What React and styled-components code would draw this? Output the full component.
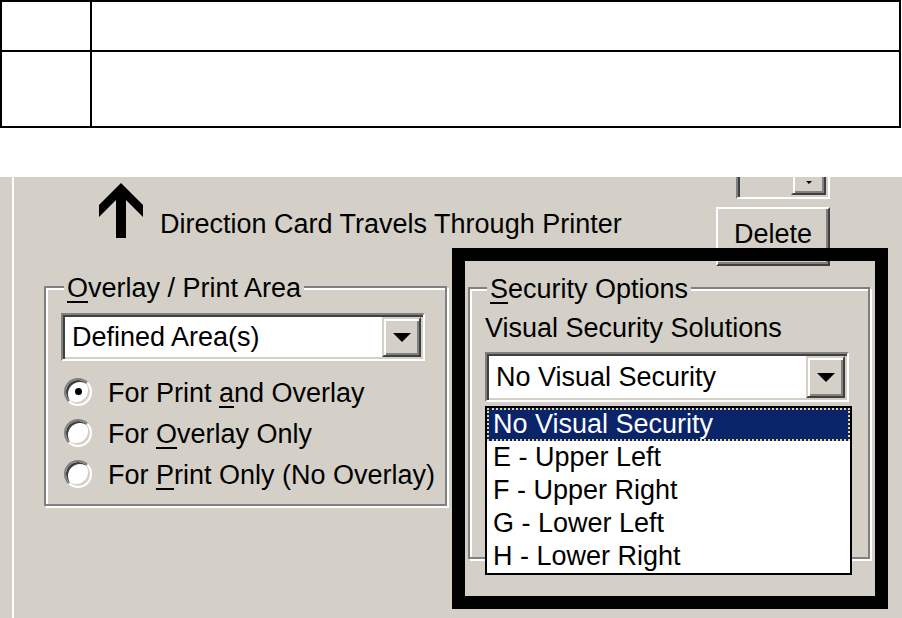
import React from 'react';
import styled, { createGlobalStyle, css } from 'styled-components';

const GlobalStyle = createGlobalStyle`
  body {
    margin: 0;
    background: #fff;
    font-family: 'Liberation Sans', Arial, sans-serif;
    color: #000;
  }
`;

const face = '#d4d0c8';

const Page = styled.div`
  width: 902px;
`;

const DocTable = styled.table`
  width: 901px;
  border-collapse: collapse;
`;

const Row = styled.tr`
  height: ${({ h }) => h}px;
`;

const Cell = styled.td`
  border: 2px solid #000;
  padding: 0;
  width: ${({ w }) => (w ? `${w}px` : 'auto')};
`;

const Panel = styled.div`
  position: relative;
  margin-top: 49px;
  height: 442px;
  box-sizing: border-box;
  padding-left: 12px;
  background: ${face};
  overflow: hidden;
  font-size: 27px;
`;

const PanelInner = styled.div`
  height: 100%;
  border-left: 2px solid #fff;
  display: flex;
  flex-direction: column;
`;

const Header = styled.div`
  display: flex;
  align-items: flex-start;
  height: 89px;
`;

const Caption = styled.div`
  display: flex;
  align-items: flex-start;
  margin: 6px 0 0 85px;
`;

const CaptionText = styled.span`
  margin: 26px 0 0 17px;
  line-height: 31px;
  white-space: nowrap;
`;

const SideColumn = styled.div`
  margin: 0 72px 0 auto;
  width: 114px;
  display: flex;
  flex-direction: column;
  align-items: flex-end;
`;

const StubCombo = styled.div`
  width: 94px;
  height: 40px;
  margin-top: -18px;
  box-sizing: border-box;
  border: 2px solid;
  border-color: #808080 #fff #fff #808080;
  box-shadow: inset 2px 2px 0 #404040;
  display: flex;
  justify-content: flex-end;
  padding: 0 2px 2px 0;
`;

const StubButton = styled.div`
  width: 35px;
  box-sizing: border-box;
  border: 2px solid;
  border-color: ${face} #404040 #404040 ${face};
  box-shadow: inset 2px 2px 0 #fff, inset -2px -2px 0 #808080;
  background: ${face};
  display: flex;
  align-items: flex-end;
  justify-content: center;
  padding-bottom: 9px;
`;

const SmallArrow = styled.div`
  width: 0;
  border-left: 3px solid transparent;
  border-right: 3px solid transparent;
  border-top: 3px solid #000;
`;

const Button = styled.div`
  margin-top: 8px;
  width: 114px;
  height: 59px;
  box-sizing: border-box;
  border: 2px solid;
  border-color: #fff #404040 #404040 #fff;
  box-shadow: inset -2px -2px 0 #808080;
  display: flex;
  align-items: center;
  justify-content: center;
  padding-bottom: 5px;
  line-height: 31px;
`;

const GroupsRow = styled.div`
  display: flex;
  align-items: flex-start;
  margin-top: 20px;
`;

const GroupBox = styled.div`
  width: ${({ w }) => w}px;
  height: ${({ h }) => h}px;
  margin: ${({ top }) => top || 0}px 0 0 ${({ left }) => left}px;
  box-sizing: border-box;
  border: 2px solid #808080;
  box-shadow: inset 2px 2px 0 #fff, 2px 2px 0 #fff;
  display: flex;
  flex-direction: column;
  align-items: flex-start;
`;

const Legend = styled.div`
  margin: -15px 0 0 ${({ left }) => left}px;
  padding: 0 3px;
  background: ${face};
  line-height: 31px;
  white-space: nowrap;
`;

const Key = styled.span`
  text-decoration: underline;
  text-decoration-thickness: 2px;
  text-underline-offset: 4px;
`;

const FieldLabel = styled.div`
  margin: 8px 0 0 15px;
  line-height: 31px;
  white-space: nowrap;
`;

const Combo = styled.div`
  margin: ${({ top }) => top}px 0 0 15px;
  width: 364px;
  height: ${({ h }) => h}px;
  box-sizing: border-box;
  border: 2px solid;
  border-color: #808080 #fff #fff #808080;
  box-shadow: inset 2px 2px 0 #404040, inset -2px -2px 0 ${face};
  background: #fff;
  display: flex;
  align-items: center;
  padding: 2px 2px 2px 9px;
`;

const ComboText = styled.span`
  white-space: nowrap;
  line-height: 31px;
`;

const DropButton = styled.div`
  margin-left: auto;
  width: 39px;
  height: 100%;
  box-sizing: border-box;
  border: 2px solid;
  border-color: ${face} #404040 #404040 ${face};
  box-shadow: inset 2px 2px 0 #fff, inset -2px -2px 0 #808080;
  background: ${face};
  display: flex;
  align-items: center;
  justify-content: center;
`;

const DropArrow = styled.div`
  width: 0;
  border-left: 9px solid transparent;
  border-right: 9px solid transparent;
  border-top: 9px solid #000;
`;

const RadioList = styled.div`
  display: flex;
  flex-direction: column;
  margin: 12px 0 0 18px;
`;

const RadioRow = styled.div`
  display: flex;
  align-items: center;
  gap: 16px;
  height: 41px;
  white-space: nowrap;
`;

const RadioCircle = styled.div`
  width: 28px;
  height: 28px;
  margin-bottom: 4px;
  box-sizing: border-box;
  border-radius: 50%;
  border: 2px solid;
  border-color: #808080 #fff #fff #808080;
  box-shadow: inset 2px 2px 0 #404040, inset -2px -2px 0 ${face};
  background: #fff;
  display: flex;
  align-items: center;
  justify-content: center;

  ${({ checked }) =>
    checked &&
    css`
      &::after {
        content: '';
        width: 7px;
        height: 7px;
        border-radius: 50%;
        background: #000;
      }
    `}
`;

const DropList = styled.div`
  position: absolute;
  left: 485px;
  top: 229px;
  width: 367px;
  box-sizing: border-box;
  border: 2px solid #000;
  background: #fff;
  z-index: 1;
`;

const DropItem = styled.div`
  line-height: 33px;
  padding-left: 6px;
  white-space: nowrap;

  ${({ selected }) =>
    selected &&
    css`
      background: #0a246a;
      color: #fff;
      outline: 2px dotted #e8d48a;
      outline-offset: -2px;
    `}
`;

const Frame = styled.div`
  position: absolute;
  left: 452px;
  top: 71px;
  width: 436px;
  height: 361px;
  box-sizing: border-box;
  border: 13px solid #000;
  z-index: 2;
  pointer-events: none;
`;

const UpArrow = () => (
  <svg width="44" height="55" viewBox="0 0 44 55">
    <polygon points="22,0 44,22 44,34 27,17 27,55 17,55 17,17 0,34 0,22" fill="#000" />
  </svg>
);

const radios = [
  { label: <>For Print <Key>a</Key>nd Overlay</>, checked: true },
  { label: <>For <Key>O</Key>verlay Only</> },
  { label: <>For <Key>P</Key>rint Only (No Overlay)</> },
];

const options = [
  'No Visual Security',
  'E - Upper Left',
  'F - Upper Right',
  'G - Lower Left',
  'H - Lower Right',
];

const App = () => (
  <Page>
    <GlobalStyle />
    <DocTable>
      <tbody>
        <Row h={50}>
          <Cell w={88} />
          <Cell />
        </Row>
        <Row h={76}>
          <Cell w={88} />
          <Cell />
        </Row>
      </tbody>
    </DocTable>

    <Panel>
      <PanelInner>
        <Header>
          <Caption>
            <UpArrow />
            <CaptionText>Direction Card Travels Through Printer</CaptionText>
          </Caption>
          <SideColumn>
            <StubCombo>
              <StubButton>
                <SmallArrow />
              </StubButton>
            </StubCombo>
            <Button>Delete</Button>
          </SideColumn>
        </Header>

        <GroupsRow>
          <GroupBox w={403} h={220} left={30}>
            <Legend left={18}>
              <Key>O</Key>verlay / Print Area
            </Legend>
            <Combo top={9} h={48}>
              <ComboText>Defined Area(s)</ComboText>
              <DropButton>
                <DropArrow />
              </DropButton>
            </Combo>
            <RadioList>
              {radios.map((r, i) => (
                <RadioRow key={i}>
                  <RadioCircle checked={r.checked} />
                  <span>{r.label}</span>
                </RadioRow>
              ))}
            </RadioList>
          </GroupBox>

          <GroupBox w={402} h={272} left={21} top={1}>
            <Legend left={17}>
              <Key>S</Key>ecurity Options
            </Legend>
            <FieldLabel>Visual Security Solutions</FieldLabel>
            <Combo top={8} h={50}>
              <ComboText>No Visual Security</ComboText>
              <DropButton>
                <DropArrow />
              </DropButton>
            </Combo>
          </GroupBox>
        </GroupsRow>
      </PanelInner>

      <DropList>
        {options.map((o, i) => (
          <DropItem key={o} selected={i === 0}>
            {o}
          </DropItem>
        ))}
      </DropList>

      <Frame />
    </Panel>
  </Page>
);

export default App;
